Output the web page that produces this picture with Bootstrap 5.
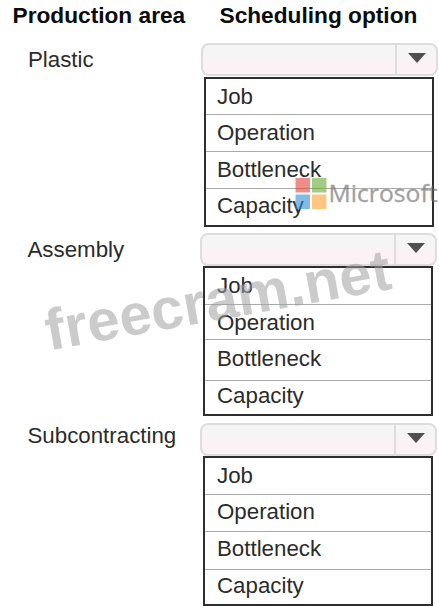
<!DOCTYPE html>
<html lang="en">
<head>
<meta charset="utf-8">
<meta name="viewport" content="width=device-width, initial-scale=1">
<title>Scheduling options</title>
<link rel="stylesheet" href="https://cdn.jsdelivr.net/npm/bootstrap@5.3.0/dist/css/bootstrap.min.css">
<style>
  body { font-family: "Liberation Sans", Arial, sans-serif; font-size: 22.3px; line-height: 30px; color: #2b2b2b; background: #fff; }
  .sheet { width: 439px; height: 606px; }
  .titles { height: 43px; font-size: 22.7px; color: #0c0c0c; padding-left: 12.5px; }
  .titles .t-area { width: 207px; }
  .area-group { height: 190px; }
  .area-label { width: 200px; padding: 2px 0 0 28px; }
  .first .area-label { width: 201px; }
  .second .area-label { padding-top: 2px; padding-left: 27.5px; }
  .third .area-label { margin-top: -2px; padding-top: 0; padding-left: 27.5px; }
  .picker { width: 237px; height: 33px; border: 2px solid #dedcdd; border-radius: 8px; background: linear-gradient(#f5f5f5 0 38%, #fdf1f4 62%, #fcf1f4); }
  .picker-toggle { width: 41px; padding-bottom: 4px; border-left: 2px solid #dedcdd; }
  .options { width: 230px; height: 150px; margin: 1px 0 0 3px; border: 2px solid #2e2e2e; border-radius: 0; background: #fff; }
  .option { height: 37px; padding: 3px 0 0 11px; border-bottom: 1px solid #aaa; flex: none; }
  .option:last-child { border-bottom: 0; height: auto; }
  .first .option:nth-child(1) { height: 36px; padding-top: 3px; }
  .first .option:nth-child(3) { padding-top: 3px; }
  .first .option:nth-child(4) { padding-top: 2px; }
  .second .options, .third .options { margin-top: 0; }
  .second .option, .third .option { padding-left: 12px; }
  .second .option:nth-child(2) { height: 35px; padding-top: 3px; }
  .second .option:nth-child(3) { height: 41px; padding-top: 4px; }
  .second .option:nth-child(4) { padding-top: 0; }
  .third { height: 183px; }
  .third .option:nth-child(2) { padding-top: 2px; }
  .third .option:nth-child(3) { height: 38px; padding-top: 2px; }
  .third .option:nth-child(4) { padding-top: 1px; }
  .overlay { pointer-events: none; }
</style>
<script src="https://cdn.jsdelivr.net/npm/bootstrap@5.3.0/dist/js/bootstrap.bundle.min.js"></script>
</head>
<body>
<main class="sheet position-relative overflow-hidden">
  <div class="titles d-flex fw-bold">
    <div class="t-area text-nowrap">Production area</div>
    <div class="text-nowrap">Scheduling option</div>
  </div>

  <section class="area-group first d-flex">
    <div class="area-label">Plastic</div>
    <div>
      <div class="picker d-flex justify-content-end">
        <div class="picker-toggle d-flex align-items-center justify-content-center">
          <svg width="20" height="12" viewBox="0 0 20 12"><path d="M1 1H19L10 11Z" fill="#505050"/></svg>
        </div>
      </div>
      <div class="options d-flex flex-column">
        <div class="option">Job</div><div class="option">Operation</div><div class="option">Bottleneck</div><div class="option">Capacity</div>
      </div>
    </div>
  </section>

  <section class="area-group second d-flex">
    <div class="area-label">Assembly</div>
    <div>
      <div class="picker d-flex justify-content-end">
        <div class="picker-toggle d-flex align-items-center justify-content-center">
          <svg width="20" height="12" viewBox="0 0 20 12"><path d="M1 1H19L10 11Z" fill="#505050"/></svg>
        </div>
      </div>
      <div class="options d-flex flex-column">
        <div class="option">Job</div><div class="option">Operation</div><div class="option">Bottleneck</div><div class="option">Capacity</div>
      </div>
    </div>
  </section>

  <section class="area-group third d-flex">
    <div class="area-label">Subcontracting</div>
    <div>
      <div class="picker d-flex justify-content-end">
        <div class="picker-toggle d-flex align-items-center justify-content-center">
          <svg width="20" height="12" viewBox="0 0 20 12"><path d="M1 1H19L10 11Z" fill="#505050"/></svg>
        </div>
      </div>
      <div class="options d-flex flex-column">
        <div class="option">Job</div><div class="option">Operation</div><div class="option">Bottleneck</div><div class="option">Capacity</div>
      </div>
    </div>
  </section>

  <!-- Translucent brand marks above the form -->
  <svg class="overlay position-absolute top-0 start-0" width="439" height="606" viewBox="0 0 439 606">
    <g opacity=".6">
      <path fill="#e8423a" d="M295.500 178h14.500v14.500h-14.500z"/>
      <path fill="#66aa33" d="M312 178h14.500v14.500H312z"/>
      <path fill="#2f8fd6" d="M295.500 194.500h14.500V209h-14.500z"/>
      <path fill="#ff9f2e" d="M312 194.500h14.500V209H312z"/>
    </g>
    <text x="328.500" y="201.500" font-family="'Open Sans', 'Noto Sans', sans-serif" font-size="23.500" textLength="109" lengthAdjust="spacingAndGlyphs" fill="#666" stroke="#666" stroke-width=".3" opacity=".62">Microsoft</text>
    <text transform="translate(49 350.500) rotate(-10.200)" x="0" y="0" font-family="'Liberation Sans', Arial, sans-serif" font-weight="700" font-size="58" textLength="350" fill="#a0a0a0" fill-opacity=".55">freecram.net</text>
  </svg>
</main>
</body>
</html>
